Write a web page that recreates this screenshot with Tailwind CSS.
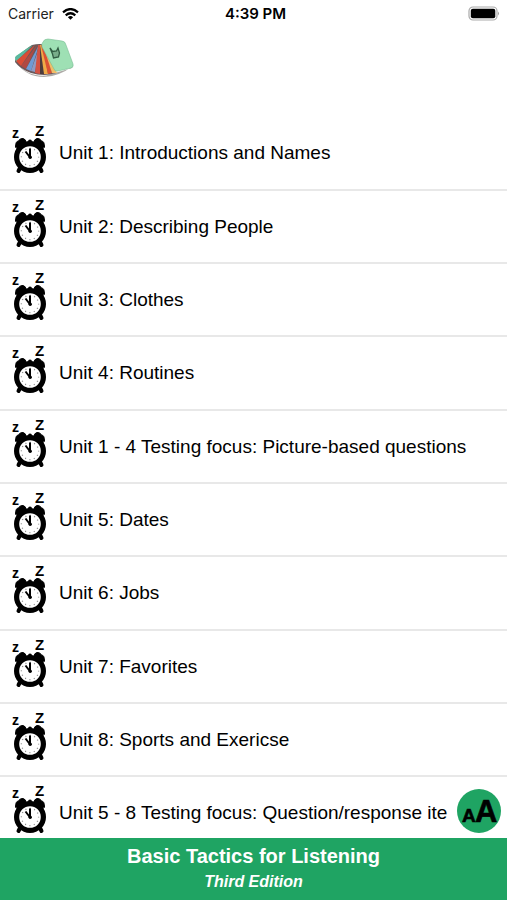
<!DOCTYPE html>
<html lang="en">
<head>
<meta charset="utf-8">
<meta name="viewport" content="width=device-width, initial-scale=1">
<title>Basic Tactics for Listening</title>
<script src="https://cdn.jsdelivr.net/npm/@tailwindcss/browser@4"></script>
</head>
<body class="bg-white text-black font-['Liberation_Sans',Arial,sans-serif]">
<svg class="hidden" aria-hidden="true">
  <symbol id="alarm" viewBox="0 0 36 48" overflow="visible">
    <g font-family="Liberation Sans, Arial, sans-serif" font-weight="700">
      <text x="0" y="11" font-size="14">z</text>
      <text x="23" y="9" font-size="15">Z</text>
    </g>
    <g stroke="#000" stroke-linecap="round">
      <path d="M8 41l-1.500 3M28 41l1.500 3" stroke-width="4"/>
      <path d="M18 14.500v3" stroke-width="4"/>
      <path d="M3.500 20Q3.500 14 6.500 14Q8 11 11 11.500Q14 12 14 16L7 22ZM32.500 20Q32.500 14 29.500 14Q28 11 25 11.500Q22 12 22 16L29 22Z" stroke-width="1" stroke-linejoin="round"/>
    </g>
    <circle cx="18" cy="30" r="13.400" fill="#fff" stroke="#000" stroke-width="5.200"/>
    <circle cx="18" cy="30" r="8.600" fill="none" stroke="#888" stroke-width="1.300" stroke-dasharray="1 3.503" stroke-dashoffset=".5"/>
    <path d="M18 30.500V21.500M18.500 31L13.500 24.500" stroke="#000" stroke-width="2" fill="none"/>
    <circle cx="18.200" cy="30.300" r="1.700"/>
  </symbol>
</svg>
<div class="relative flex h-screen flex-col overflow-hidden">
  <div class="grid h-7 shrink-0 grid-cols-3 items-center pr-1 pl-2 font-['Inter',sans-serif] text-[14px] leading-7">
    <div class="flex items-center gap-2">
      <span class="text-[#222]">Carrier</span>
      <svg class="h-3 w-[17px]" viewBox="0 0 17 12" fill="none" stroke="#000" stroke-width="2.200" aria-label="Wi-Fi">
        <path d="M1 4.300Q8.500 -2.200 16 4.300M3.700 7.300Q8.500 3.200 13.300 7.300"/>
        <path d="M8.500 11.800L5.900 9.200Q8.500 7 11.100 9.200Z" fill="#000" stroke="none"/>
      </svg>
    </div>
    <div class="whitespace-nowrap text-center text-[15px] font-semibold">4:39 PM</div>
    <svg class="mr-1 h-4 w-8 justify-self-end" viewBox="0 0 32 16" aria-label="Battery full">
      <rect x="2" y="1" width="28" height="13" rx="4" fill="#fff" stroke="#aaa" stroke-width="1.200"/>
      <rect x="3.800" y="2.800" width="24.500" height="9.400" rx="2" fill="#000"/>
      <path d="M31 5.500q1.500 2 0 4z" fill="#888"/>
    </svg>
  </div>
  <header class="h-[89px] shrink-0 px-3 pt-[9px]">
    <a href="#" aria-label="Flash cards" class="inline-block">
      <svg class="h-11 w-16" viewBox="0 0 64 44">
        <path d="M4 25Q15 40 34 38.500L60 31L61 29Q46 40 32 40Q14 40 4 25Z" fill="#77716b" opacity=".6"/>
        <path d="M20 8Q28 6 35 8L44 36Q32 40 19 36Q8 32 3 25Q2 20 20 8Z" fill="#6b585a"/>
        <path d="M20 8L4 19L3 23Z" fill="#58c296"/>
        <path d="M21 8L3 20L4 25Z" fill="#5bb8a0"/>
        <path d="M23 8L4 24L9 29Z" fill="#d94c35"/>
        <path d="M25 8L9 29L14 32Z" fill="#b04942"/>
        <path d="M27 8L14 32L19 34Z" fill="#6e9bd4"/>
        <path d="M28 8L19 34L23 35Z" fill="#8d9cc4"/>
        <path d="M26 8L23 36L28 37L31 8Z" fill="#d35243"/>
        <path d="M28 8L28 37L32 37L31 8Z" fill="#4d3b3c"/>
        <path d="M28 8L32 37L36 37L31 8Z" fill="#f0aa47"/>
        <path d="M29 8L36 37L40 36L32 8Z" fill="#dc5133"/>
        <path d="M31 8L40 36L45 36L34 10Z" fill="#f1bd68"/>
        <path d="M31 5Q32 2 36 2L50 4Q53 4 54 8L61 27Q62 30 59 31L46 34Q43 35 42 32L30 10Q29 7 31 5Z" fill="#9ee0b4" stroke="#79bd93" stroke-width=".6"/>
        <path d="M38 11l2.500 3.500 4-.5 1.500-3 1.500 5-1 4-5 1-1-4z" fill="#78ad8a" stroke="#315c43" stroke-width="1.300"/>
      </svg>
    </a>
  </header>
  <main class="min-h-0 flex-1 overflow-hidden">
    <ul class="text-[19px] leading-6 [&>li]:h-[73px] [&>li:nth-child(3n+1)]:h-[74px] [&>li]:border-b-2 [&>li]:border-[#e8e8e8] [&_a]:flex [&_a]:h-full [&_a]:items-center [&_a]:gap-[11px] [&_a]:whitespace-nowrap [&_a]:pl-3 [&_svg]:h-12 [&_svg]:w-9 [&_svg]:shrink-0 [&_svg]:-mt-1 [&_svg]:overflow-visible">
      <li><a href="#"><svg><use href="#alarm"/></svg>Unit 1: Introductions and Names</a></li>
      <li><a href="#"><svg><use href="#alarm"/></svg>Unit 2: Describing People</a></li>
      <li><a href="#"><svg><use href="#alarm"/></svg>Unit 3: Clothes</a></li>
      <li><a href="#"><svg><use href="#alarm"/></svg>Unit 4: Routines</a></li>
      <li><a href="#"><svg><use href="#alarm"/></svg>Unit 1 - 4 Testing focus: Picture-based questions</a></li>
      <li><a href="#"><svg><use href="#alarm"/></svg>Unit 5: Dates</a></li>
      <li><a href="#"><svg><use href="#alarm"/></svg>Unit 6: Jobs</a></li>
      <li><a href="#"><svg><use href="#alarm"/></svg>Unit 7: Favorites</a></li>
      <li><a href="#"><svg><use href="#alarm"/></svg>Unit 8: Sports and Exericse</a></li>
      <li><a href="#"><svg><use href="#alarm"/></svg>Unit 5 - 8 Testing focus: Question/response ite</a></li>
    </ul>
  </main>
  <button type="button" aria-label="Text size" class="absolute right-[6px] bottom-[67px] size-11 rounded-full bg-[#1fa463]">
    <svg class="size-11" viewBox="0 0 44 44" font-family="Liberation Sans, Arial, sans-serif" stroke="#000" stroke-width=".6" aria-hidden="true">
      <text x="5" y="33" font-size="19" font-weight="700">A</text>
      <text x="18" y="33" font-size="31" font-weight="700">A</text>
    </svg>
  </button>
  <footer class="h-[62px] shrink-0 bg-[#1fa463] pt-1 text-center font-bold text-white">
    <h1 class="text-[20px] leading-7">Basic Tactics for Listening</h1>
    <p class="text-[16px] leading-6 italic">Third Edition</p>
  </footer>
</div>
</body>
</html>
